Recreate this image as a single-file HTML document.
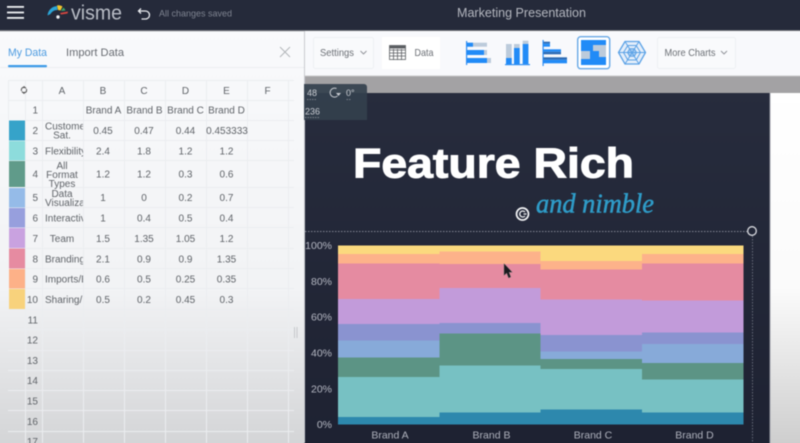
<!DOCTYPE html>
<html lang="en">
<head>
<meta charset="utf-8">
<title>Marketing Presentation</title>
<style>
html,body{margin:0;padding:0;width:800px;height:443px;overflow:hidden;background:#252a3a}
svg{display:block;font-family:"Liberation Sans",sans-serif}
#all{filter:blur(.4px)}
.t{font-size:10px;fill:#5f6368;text-anchor:middle}
.n{font-size:10px;fill:#5f6368;text-anchor:end}
.a{font-size:10px;fill:#5f6368}
.y{font-size:10.5px;fill:#b4b7c2;text-anchor:end}
.x{font-size:10.5px;fill:#aeb1bc;text-anchor:middle}
.g{stroke:#ebedf0;stroke-width:1;fill:none}
.c{shape-rendering:crispEdges}
</style>
</head>
<body>
<svg width="800" height="443" viewBox="0 0 800 443" xmlns="http://www.w3.org/2000/svg">
<defs>
<linearGradient id="pg" x1="0" y1="0" x2="0" y2="1">
<stop offset="0" stop-color="#f9fafc"/><stop offset=".62" stop-color="#f2f3f5"/><stop offset="1" stop-color="#d3d4d6"/>
</linearGradient>
<linearGradient id="rg" x1="0" y1="0" x2="0" y2="1">
<stop offset="0" stop-color="#ffffff"/><stop offset=".55" stop-color="#fbfbfb"/><stop offset="1" stop-color="#cdcdcd"/>
</linearGradient>
<linearGradient id="cg" x1="0" y1="0" x2="0" y2="1">
<stop offset="0" stop-color="#272c3d"/><stop offset="1" stop-color="#1e2232"/>
</linearGradient>
<clipPath id="ca"><rect x="42" y="100" width="41" height="215"/></clipPath>
</defs>
<g id="all">
<rect x="-5" y="-5" width="810" height="453" fill="#252a3a"/>

<!-- left panel -->
<rect x="-5" y="31" width="309" height="417" fill="url(#pg)"/>
<!-- top bar -->
<rect x="-5" y="-5" width="810" height="35" fill="#252a3a"/>
<rect x="-5" y="30" width="810" height="1.2" fill="#6f7278"/>

<rect x="7" y="6" width="17" height="1.8" fill="#eef0f3"/>
<rect x="7" y="11.6" width="17" height="1.8" fill="#eef0f3"/>
<rect x="7" y="17" width="17" height="1.8" fill="#eef0f3"/>

<!-- logo -->
<path d="M47.5 15.5C48 10 52 6.5 57 6L57.5 10C54 10 52 11.5 50.5 14Z" fill="#2ba5d6"/>
<path d="M57 5.5C59 5 61 5.5 62.5 6.5L60.5 10.5L58 10Z" fill="#f2c62d"/>
<path d="M61 11L63.5 7.5C64.5 8.5 65 9.5 65.5 10.5Z" fill="#3aa76d"/>
<path d="M60 13L68 11.5L67.5 13.5L61 14.5Z" fill="#d8473f"/>
<circle cx="58" cy="17" r="1.7" fill="#eef0f3"/>
<text x="71" y="19.5" font-size="20" fill="#b9bdc6" textLength="51" lengthAdjust="spacingAndGlyphs">visme</text>

<!-- undo -->
<path d="M141 8.5L138.5 11L141 13.5M139 11H145.5A4 4 0 0 1 145.5 19H141.5" fill="none" stroke="#e9ebef" stroke-width="1.3"/>
<text x="159" y="16.500" font-size="9.500" fill="#7f8491" textLength="73" lengthAdjust="spacingAndGlyphs">All changes saved</text>
<text x="457" y="17" font-size="12.500" fill="#b4b7bf" textLength="129" lengthAdjust="spacingAndGlyphs">Marketing Presentation</text>

<!-- tabs -->
<text x="8" y="56" font-size="11" fill="#4a9ae0" textLength="39" lengthAdjust="spacingAndGlyphs">My Data</text>
<text x="66" y="56" font-size="11" fill="#666a70" textLength="58" lengthAdjust="spacingAndGlyphs">Import Data</text>
<rect x="0" y="67" width="304" height="1" fill="#eceef1"/>
<rect x="8" y="65" width="39" height="2.2" rx="1" fill="#3d9be8"/>
<path d="M280 47L290 57M290 47L280 57" stroke="#b3b6ba" stroke-width="1" fill="none"/>

<!-- grid -->
<g class="g">
<path d="M8 80.5H294M8 100.5H294M25 120.5H294M25 140.5H294M25 160.5H294M25 187.5H294M25 207.5H294M25 227.5H294M25 248.5H294M25 268.5H294M25 288.5H294M8 309.5H294M8 329.5H294M8 350.5H294M8 370.5H294M8 390.5H294M8 410.5H294M8 431.5H294"/>
<path d="M8.5 80V120M25.5 80V443M42.5 80V443M83.5 80V443M124.5 80V443M165.5 80V443M206.5 80V443M247.5 80V443M288.5 80V443"/>
</g>
<g fill="none" stroke="#555" stroke-width="1">
<path d="M21.500 91A2.500 3 0 0 1 26 88.500M26.500 89A2.500 3 0 0 1 22 91.500"/>
</g>
<path d="M24 85.800L25.500 87.800L23 88.300ZM24 94.200L22.500 92.200L25 91.700Z" fill="#555"/>
<g class="t">
<text x="62" y="94">A</text><text x="103" y="94">B</text><text x="144" y="94">C</text><text x="185.500" y="94">D</text><text x="226.500" y="94">E</text><text x="267.500" y="94">F</text>
</g>

<!-- swatches -->
<rect x="9" y="120.500" width="16" height="20" fill="#36a3c9"/>
<rect x="9" y="141" width="16" height="19.500" fill="#8ddcdc"/>
<rect x="9" y="161" width="16" height="26" fill="#609b8a"/>
<rect x="9" y="188" width="16" height="19.500" fill="#95bbe8"/>
<rect x="9" y="208" width="16" height="19.500" fill="#979fdd"/>
<rect x="9" y="228" width="16" height="20" fill="#c9a2e0"/>
<rect x="9" y="248.500" width="16" height="20" fill="#e68ba1"/>
<rect x="9" y="269" width="16" height="19.500" fill="#fdb188"/>
<rect x="9" y="289" width="16" height="20" fill="#f8d27c"/>

<!-- row numbers -->
<g class="n">
<text x="38" y="113.500">1</text><text x="38" y="134">2</text><text x="38" y="154.500">3</text><text x="38" y="177.500">4</text><text x="38" y="201">5</text><text x="38" y="221.500">6</text><text x="38" y="242">7</text><text x="38" y="262.500">8</text><text x="38" y="282.500">9</text><text x="38" y="303">10</text><text x="38" y="323.500">11</text><text x="38" y="343.500">12</text><text x="38" y="364">13</text><text x="38" y="384">14</text><text x="38" y="404.500">15</text><text x="38" y="425">16</text><text x="38" y="445">17</text>
</g>

<!-- column A -->
<g clip-path="url(#ca)">
<text class="a" x="45" y="129.500">Customer</text>
<text class="t" x="62" y="138.500">Sat.</text>
<text class="a" x="45" y="154.500">Flexibility</text>
<text class="t" x="62" y="169">All</text>
<text class="t" x="62" y="178">Format</text>
<text class="t" x="62" y="187">Types</text>
<text class="t" x="62" y="197">Data</text>
<text class="a" x="45" y="206">Visualization</text>
<text class="a" x="45" y="221.500">Interactive</text>
<text class="t" x="62" y="242">Team</text>
<text class="a" x="45" y="262.500">Branding</text>
<text class="a" x="45" y="282.500">Imports/Exports</text>
<text class="a" x="45" y="303">Sharing/Publishing</text>
</g>

<!-- data -->
<g class="t">
<text x="103.500" y="113.500">Brand A</text><text x="144.500" y="113.500">Brand B</text><text x="185.500" y="113.500">Brand C</text><text x="226.500" y="113.500">Brand D</text>
<text x="103" y="134">0.45</text><text x="144" y="134">0.47</text><text x="185.500" y="134">0.44</text><text x="227" y="134">0.453333</text>
<text x="103" y="154.500">2.4</text><text x="144" y="154.500">1.8</text><text x="185.500" y="154.500">1.2</text><text x="226.500" y="154.500">1.2</text>
<text x="103" y="177.500">1.2</text><text x="144" y="177.500">1.2</text><text x="185.500" y="177.500">0.3</text><text x="226.500" y="177.500">0.6</text>
<text x="103" y="201">1</text><text x="144" y="201">0</text><text x="185.500" y="201">0.2</text><text x="226.500" y="201">0.7</text>
<text x="103" y="221.500">1</text><text x="144" y="221.500">0.4</text><text x="185.500" y="221.500">0.5</text><text x="226.500" y="221.500">0.4</text>
<text x="103" y="242">1.5</text><text x="144" y="242">1.35</text><text x="185.500" y="242">1.05</text><text x="226.500" y="242">1.2</text>
<text x="103" y="262.500">2.1</text><text x="144" y="262.500">0.9</text><text x="185.500" y="262.500">0.9</text><text x="226.500" y="262.500">1.35</text>
<text x="103" y="282.500">0.6</text><text x="144" y="282.500">0.5</text><text x="185.500" y="282.500">0.25</text><text x="226.500" y="282.500">0.35</text>
<text x="103" y="303">0.5</text><text x="144" y="303">0.2</text><text x="185.500" y="303">0.45</text><text x="226.500" y="303">0.3</text>
</g>
<path d="M294.500 327V338M297 327V338" stroke="#c6c8cb" stroke-width="1" fill="none"/>

<!-- right side -->
<rect x="304" y="31" width="501" height="45" fill="#f8f9fc"/>
<rect x="304" y="31" width="1" height="412" fill="#c9cbd0"/>
<rect x="304" y="75.500" width="501" height="1" fill="#c8c8ca"/>
<rect x="305" y="76.500" width="500" height="17" fill="#a3a2a4"/>
<rect x="305" y="93" width="465" height="355" fill="url(#cg)"/>
<rect x="770" y="93" width="35" height="355" fill="url(#rg)"/>
<rect x="769.500" y="93" width="1" height="355" fill="#9a9ca6"/>

<!-- toolbar buttons -->
<rect x="313.500" y="37.500" width="60" height="31" rx="2" fill="#f9fafc" stroke="#eef0f3"/>
<text x="320" y="56" font-size="10.500" fill="#6b6f75" textLength="34" lengthAdjust="spacingAndGlyphs">Settings</text>
<path d="M360.500 51L363.500 54L366.500 51" fill="none" stroke="#8d9096" stroke-width=".9"/>
<rect x="382" y="37" width="58" height="32" fill="#ffffff"/>
<g fill="none" stroke="#5b5e62" stroke-width=".8">
<rect x="389.500" y="45.500" width="16" height="14"/>
<path d="M389.500 50H405.500M389.500 53H405.500M389.500 56H405.500M393.500 49V60M397.500 49V60M401.500 49V60"/>
</g>
<rect x="389.500" y="45.500" width="16" height="3" fill="#5b5e62"/>
<text x="414.500" y="56" font-size="10.500" fill="#6b6f75" textLength="19" lengthAdjust="spacingAndGlyphs">Data</text>
<rect x="657.500" y="37.500" width="78" height="31" rx="2" fill="#f9fafc" stroke="#eef0f3"/>
<text x="664.500" y="56" font-size="10.500" fill="#6b6f75" textLength="51" lengthAdjust="spacingAndGlyphs">More Charts</text>
<path d="M721 51L724 54L727 51" fill="none" stroke="#8d9096" stroke-width=".9"/>

<!-- icon 1 -->
<rect x="466" y="41" width="1.200" height="24" fill="#2d8df2"/>
<rect x="467" y="42.700" width="20" height="4" fill="#bccbdb"/>
<rect x="467" y="42.700" width="6" height="4" fill="#218bf7"/>
<rect x="467" y="50" width="20" height="5" fill="#bccbdb"/>
<rect x="467" y="50" width="17" height="5" fill="#218bf7"/>
<rect x="467" y="58" width="24" height="5" fill="#bccbdb"/>
<rect x="467" y="58" width="20" height="5" fill="#218bf7"/>

<!-- icon 2 -->
<rect x="505" y="64" width="25" height="1.200" fill="#2d8df2"/>
<rect x="506" y="44" width="5.700" height="20" fill="#bccbdb"/>
<rect x="506" y="58" width="5.700" height="6" fill="#218bf7"/>
<rect x="514" y="44" width="5.700" height="20" fill="#bccbdb"/>
<rect x="514" y="48" width="5.700" height="16" fill="#218bf7"/>
<rect x="522.700" y="40.700" width="5.700" height="23.500" fill="#bccbdb"/>
<rect x="522.700" y="44" width="5.700" height="20.200" fill="#218bf7"/>

<!-- icon 3 -->
<rect x="542.500" y="40" width="1.200" height="26" fill="#2d8df2"/>
<rect x="543.500" y="41.700" width="6.500" height="2" fill="#2c6bb5"/>
<rect x="543.500" y="43.700" width="6.500" height="3" fill="#218bf7"/>
<rect x="543.500" y="49.300" width="17.500" height="2.500" fill="#218bf7"/>
<rect x="543.500" y="51.800" width="17.500" height="2.500" fill="#2c6bb5"/>
<rect x="543.500" y="57.300" width="23.500" height="2.500" fill="#2c6bb5"/>
<rect x="543.500" y="59.800" width="23.500" height="3.500" fill="#218bf7"/>

<!-- icon 4 selected -->
<rect x="577.700" y="36.700" width="32" height="32" rx="3" fill="#ffffff" stroke="#69a9e6" stroke-width="1.400"/>
<rect x="581" y="40" width="25" height="25" fill="#bccbdb"/>
<path d="M581 40H606V45H593V51H599V57H606V65H581V59H590V51H581Z" fill="#218bf7"/>

<!-- icon 5 web -->
<g fill="none" stroke="#5ba2e6" stroke-width="1">
<path d="M618.500 52.500L625 41.500H639L645.500 52.500L639 64H625Z" fill="#e4eefa" stroke-width="1.300"/>
<path d="M623.500 52.500L627.800 45.500H636.200L640.500 52.500L636.200 60H627.800Z"/>
<path d="M627.500 52.500L629.700 48.800H634.300L636.500 52.500L634.300 56.200H629.700Z" fill="#a9cdf2"/>
<path d="M618.500 52.500H645.500M625 41.500L639 64M639 41.500L625 64"/>
</g>

<!-- rotate panel -->
<path d="M304 84H364A3 3 0 0 1 367 87V120H304Z" fill="#33404d" fill-opacity=".92"/>
<g font-size="9" fill="#c9ccd2">
<text x="307" y="96">48</text>
<text x="346" y="96">0°</text>
<text x="305" y="114.500">236</text>
</g>
<path d="M307 99.500H316M346.500 99.500H351M305 117.500H319" stroke="#8c939b" stroke-width=".8" stroke-dasharray="1.500 1" fill="none"/>
<path d="M337.500 96A4.500 4.500 0 1 1 336.500 88.500" fill="none" stroke="#c9ccd2" stroke-width="1"/>
<path d="M336 93L341 93L338.500 96Z" fill="#c9ccd2"/>

<!-- title -->
<text x="353" y="177.500" font-size="42" font-weight="700" fill="#ffffff" stroke="#ffffff" stroke-width="1" textLength="281" lengthAdjust="spacingAndGlyphs">Feature Rich</text>
<text x="536" y="212.700" font-family="Liberation Serif,serif" font-size="27" font-style="italic" fill="#2f9cc8" stroke="#2f9cc8" stroke-width=".5" textLength="118" lengthAdjust="spacingAndGlyphs">and nimble</text>
<circle cx="522.500" cy="214" r="6" fill="none" stroke="#f2f3f5" stroke-width="1.700"/>
<path d="M525 212A3 3 0 1 0 525 216M523.500 214H526.500" fill="none" stroke="#f2f3f5" stroke-width="1.300"/>

<!-- selection -->
<path d="M305 231.500H748" stroke="#9ea2ad" stroke-width=".8" stroke-dasharray="1.500 1.500" fill="none"/>
<path d="M752.500 236V443" stroke="#757a87" stroke-width=".8" stroke-dasharray="1.500 1.500" fill="none"/>
<circle cx="752" cy="231" r="4.300" fill="none" stroke="#d9dbe0" stroke-width="1.300"/>

<g class="c">
<!-- chart: Brand A -->
<rect x="338" y="245.300" width="101.300" height="8.700" fill="#fbd97e"/>
<rect x="338" y="254" width="101.300" height="9.700" fill="#fdb28a"/>
<rect x="338" y="263.700" width="101.300" height="35.300" fill="#e58ba1"/>
<rect x="338" y="299" width="101.300" height="25" fill="#c29bda"/>
<rect x="338" y="324" width="101.300" height="16.700" fill="#8a93d0"/>
<rect x="338" y="340.700" width="101.300" height="16.600" fill="#87aad9"/>
<rect x="338" y="357.300" width="101.300" height="19.700" fill="#5c9485"/>
<rect x="338" y="377" width="101.300" height="40" fill="#77c1c3"/>
<rect x="338" y="417" width="101.300" height="7.700" fill="#2d88ad"/>
<!-- Brand B -->
<rect x="439.300" y="245.300" width="101.400" height="6" fill="#fbd97e"/>
<rect x="439.300" y="251.300" width="101.400" height="12.700" fill="#fdb28a"/>
<rect x="439.300" y="264" width="101.400" height="24" fill="#e58ba1"/>
<rect x="439.300" y="288" width="101.400" height="35" fill="#c29bda"/>
<rect x="439.300" y="323" width="101.400" height="10.700" fill="#8a93d0"/>
<rect x="439.300" y="333.700" width="101.400" height="31.600" fill="#5c9485"/>
<rect x="439.300" y="365.300" width="101.400" height="47" fill="#77c1c3"/>
<rect x="439.300" y="412.300" width="101.400" height="12.400" fill="#2d88ad"/>
<!-- Brand C -->
<rect x="540.700" y="245.300" width="101.300" height="15.700" fill="#fbd97e"/>
<rect x="540.700" y="261" width="101.300" height="8.700" fill="#fdb28a"/>
<rect x="540.700" y="269.700" width="101.300" height="30" fill="#e58ba1"/>
<rect x="540.700" y="299.700" width="101.300" height="35.300" fill="#c29bda"/>
<rect x="540.700" y="335" width="101.300" height="16.700" fill="#8a93d0"/>
<rect x="540.700" y="351.700" width="101.300" height="7.300" fill="#87aad9"/>
<rect x="540.700" y="359" width="101.300" height="10" fill="#5c9485"/>
<rect x="540.700" y="369" width="101.300" height="40.700" fill="#77c1c3"/>
<rect x="540.700" y="409.700" width="101.300" height="15" fill="#2d88ad"/>
<!-- Brand D -->
<rect x="642" y="245.300" width="101.300" height="8.700" fill="#fbd97e"/>
<rect x="642" y="254" width="101.300" height="9.300" fill="#fdb28a"/>
<rect x="642" y="263.300" width="101.300" height="37" fill="#e58ba1"/>
<rect x="642" y="300.300" width="101.300" height="32.400" fill="#c29bda"/>
<rect x="642" y="332.700" width="101.300" height="11.300" fill="#8a93d0"/>
<rect x="642" y="344" width="101.300" height="19" fill="#87aad9"/>
<rect x="642" y="363" width="101.300" height="16.700" fill="#5c9485"/>
<rect x="642" y="379.700" width="101.300" height="32.600" fill="#77c1c3"/>
<rect x="642" y="412.300" width="101.300" height="12.400" fill="#2d88ad"/>
</g>

<!-- axis labels -->
<g class="y">
<text x="332" y="249">100%</text><text x="332" y="285">80%</text><text x="332" y="320.500">60%</text><text x="332" y="356.500">40%</text><text x="332" y="392.500">20%</text><text x="332" y="428">0%</text>
</g>
<g class="x">
<text x="390" y="438.500">Brand A</text><text x="491.500" y="438.500">Brand B</text><text x="593" y="438.500">Brand C</text><text x="694.500" y="438.500">Brand D</text>
</g>

<!-- cursor -->
<path d="M504 263.500V275.500L506.700 273L508.600 278L510.800 277L509 272.300H512.300Z" fill="#1a1a1f" stroke="#777" stroke-width=".4"/>
</g>
</svg>
</body>
</html>
